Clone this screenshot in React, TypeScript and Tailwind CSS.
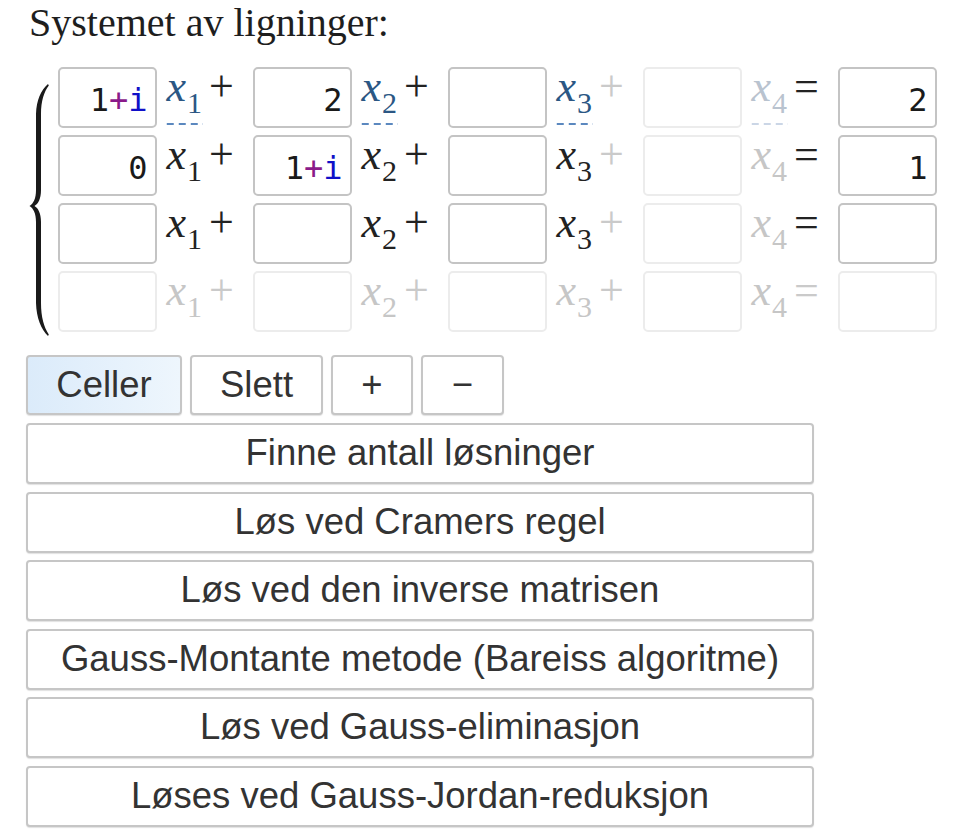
import React from "react";

const ACTIVE_BORDER = "border-[#c4c4c4]";
const FADED_BORDER = "border-[#ececec]";

function Box({ value, faded }: { value?: React.ReactNode; faded?: boolean }) {
  return (
    <div
      className={`w-[99px] h-[61px] shrink-0 rounded-[5px] border-2 ${faded ? FADED_BORDER : ACTIVE_BORDER} bg-white flex items-center justify-end pr-[7px] pt-[5px] text-[32px] text-[#1a1a1a] leading-none`}
      style={{ fontFamily: '"DejaVu Sans Mono", "Liberation Mono", monospace' }}
    >
      {value}
    </div>
  );
}

function OnePlusI() {
  return (
    <span>
      1<span className="text-[#8a1a8a]">+</span>
      <span className="text-[#1010c8]">i</span>
    </span>
  );
}

type VarStyle = "blue" | "blueFaded" | "dark" | "faded";

function Label({
  idx,
  varStyle,
  op,
  opFaded,
}: {
  idx: number;
  varStyle: VarStyle;
  op: string;
  opFaded: boolean;
}) {
  const varColor =
    varStyle === "blue"
      ? "text-[#2b5784]"
      : varStyle === "blueFaded"
      ? "text-[#b9c3cf]"
      : varStyle === "dark"
      ? "text-[#222]"
      : "text-[#c6c6c6]";
  const underline =
    varStyle === "blue"
      ? "bg-[linear-gradient(to_right,#5b88bf_7px,transparent_7px)] bg-[length:12px_2px] bg-repeat-x bg-bottom"
      : varStyle === "blueFaded"
      ? "bg-[linear-gradient(to_right,#cbd6e6_7px,transparent_7px)] bg-[length:12px_2px] bg-repeat-x bg-bottom"
      : "";
  return (
    <div
      className="w-[96px] h-[61px] shrink-0 flex items-start pl-[9px]"
      style={{ fontFamily: '"Liberation Serif", "Times New Roman", serif' }}
    >
      <span className={`block h-[58px] pl-[1px] pr-[1px] leading-[40px] whitespace-nowrap ${underline} ${varColor}`}>
        <span className="italic text-[44px]">x</span>
        <span className="relative top-[12px] text-[30px] leading-none ml-[1px]">{idx}</span>
      </span>
      <span
        className={`block leading-[40px] text-[44px] ml-[6px] ${opFaded ? "text-[#cacaca]" : "text-[#222]"}`}
      >
        {op}
      </span>
    </div>
  );
}

function Brace() {
  return (
    <svg width="31" height="265" viewBox="0 0 31 265" className="shrink-0 overflow-visible">
      <path
        fill="#1a1a1a"
        d="M22,17 C15,23 10.5,33 10,47 L10,123 C10,131.5 7.5,136.5 3.5,139 C7.5,141.5 10,146.5 10,155 L10,236 C10.5,251 15,262 22,269 L22.8,267.5 C18,260 15,250 15,236 L15,155 C15,146 12,141 8.5,139 C12,137 15,132 15,123 L15,47 C15,34 18,25 22.8,18.5 Z"
      />
    </svg>
  );
}

const rows: { values: React.ReactNode[]; rowType: "first" | "mid" | "faded" }[] = [
  { values: [<OnePlusI key="a" />, "2", "", "", "2"], rowType: "first" },
  { values: ["0", <OnePlusI key="b" />, "", "", "1"], rowType: "mid" },
  { values: ["", "", "", "", ""], rowType: "mid" },
  { values: ["", "", "", "", ""], rowType: "faded" },
];

function Row({ values, rowType }: { values: React.ReactNode[]; rowType: "first" | "mid" | "faded" }) {
  const cells = [0, 1, 2, 3].map((c) => {
    const boxFaded = rowType === "faded" || c === 3;
    let vs: VarStyle;
    if (rowType === "faded") vs = "faded";
    else if (rowType === "first") vs = c === 3 ? "blueFaded" : "blue";
    else vs = c === 3 ? "faded" : "dark";
    const op = c === 3 ? "=" : "+";
    const opFaded = rowType === "faded" || c === 2;
    return (
      <React.Fragment key={c}>
        <Box value={values[c]} faded={boxFaded} />
        <Label idx={c + 1} varStyle={vs} op={op} opFaded={opFaded} />
      </React.Fragment>
    );
  });
  return (
    <div className="flex items-start">
      {cells}
      <Box value={values[4]} faded={rowType === "faded"} />
    </div>
  );
}

const btnBase =
  "h-[60px] rounded-[4px] border-2 border-[#c6c6c6] shadow-[0_1px_1px_rgba(0,0,0,0.12)] text-[36.5px] text-[#333] flex items-center justify-center px-[29px]";

export default function App() {
  const sans = { fontFamily: '"Liberation Sans", Arial, sans-serif' };
  return (
    <div className="w-[957px] h-[831px] bg-white overflow-hidden pl-[26px]">
      <div
        className="pl-[3px] text-[40px] leading-[46px] text-[#1e1e1e]"
        style={{ fontFamily: '"Liberation Serif", "Times New Roman", serif' }}
      >
        Systemet av ligninger:
      </div>
      <div className="mt-[21px] flex items-start">
        <Brace />
        <div className="flex flex-col gap-[7px] ml-[0.5px]">
          {rows.map((r, i) => (
            <Row key={i} values={r.values} rowType={r.rowType} />
          ))}
        </div>
      </div>
      <div className="mt-[23px] flex gap-[8px]" style={sans}>
        <div className={`${btnBase} w-[156px] bg-gradient-to-r from-[#dbebfa] to-[#eef6fd]`}>Celler</div>
        <div className={`${btnBase} w-[133px] bg-white`}>Slett</div>
        <div className={`${btnBase} w-[82px] bg-white`}>+</div>
        <div className={`${btnBase} w-[83px] bg-white`}>−</div>
      </div>
      <div className="mt-[8px] w-[788px] flex flex-col gap-[7.5px]" style={sans}>
        {[
          "Finne antall løsninger",
          "Løs ved Cramers regel",
          "Løs ved den inverse matrisen",
          "Gauss-Montante metode (Bareiss algoritme)",
          "Løs ved Gauss-eliminasjon",
          "Løses ved Gauss-Jordan-reduksjon",
        ].map((t) => (
          <div
            key={t}
            className="h-[61px] rounded-[4px] border-2 border-[#c6c6c6] shadow-[0_1px_1px_rgba(0,0,0,0.12)] bg-white text-[36.5px] text-[#333] flex items-center justify-center whitespace-nowrap"
          >
            {t}
          </div>
        ))}
      </div>
    </div>
  );
}
